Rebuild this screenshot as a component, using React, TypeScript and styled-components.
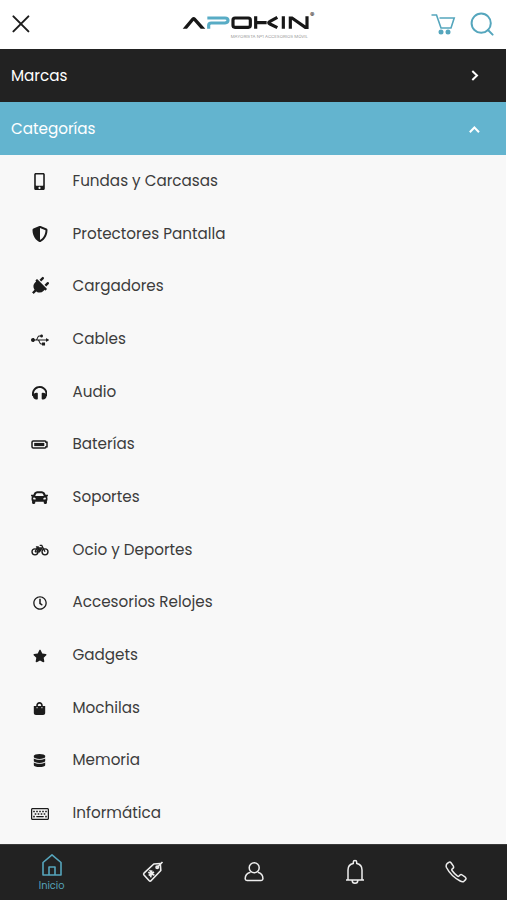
import React from "react";
import styled, { createGlobalStyle, css } from "styled-components";
import {
  FaMobileAlt, FaShieldAlt, FaPlug, FaUsb, FaCar,
  FaRegClock, FaStar, FaShoppingBag, FaDatabase, FaRegKeyboard, FaHeadphones,
} from "react-icons/fa";

const Global = createGlobalStyle`
  * { box-sizing: border-box; }
  body { margin: 0; background: #fff; font-family: Poppins, Inter, sans-serif; }
`;
const Screen = styled.div`
  width: 507px;
  height: 900px;
  display: flex;
  flex-direction: column;
  overflow: hidden;
  background: #fff;
`;
const Header = styled.header`
  height: 49px;
  flex: none;
  display: grid;
  grid-template-columns: 159px 160px 1fr;
  align-items: center;
  padding: 0 13px 0 11px;
`;
const Actions = styled.div`
  display: flex;
  justify-content: flex-end;
  align-items: center;
  gap: 14px;
  padding-bottom: 2px;
  color: #55a6bd;
`;
const CloseBox = styled.div`
  display: flex;
  padding-bottom: 2px;
  color: #1d1d1d;
`;
const Drawing = styled.svg`
  display: block;
  fill: none;
  stroke: currentColor;
`;
const Menu = styled.main`
  flex: 1;
  min-height: 0;
  display: flex;
  flex-direction: column;
  margin-right: 1px;
`;
const Bar = styled.div<{ $active?: boolean }>`
  height: 53px;
  flex: none;
  display: flex;
  align-items: center;
  justify-content: space-between;
  padding: 0 25px 0 11px;
  color: #fff;
  background: ${p => (p.$active ? "#63b4cf" : "#222")};
`;
const Label = styled.span`
  font-size: 15.2px;
  line-height: 24px;
  white-space: nowrap;
`;
const List = styled.ul`
  list-style: none;
  margin: 0;
  padding: 0;
  flex: 1;
  min-height: 0;
  overflow: hidden;
  background: #f8f8f8;
  color: #3c3c3c;
`;
const Row = styled.li`
  height: 52.68px;
  display: grid;
  grid-template-columns: 20px auto;
  justify-content: start;
  column-gap: 23px;
  align-items: center;
  padding: 0 0 1px 29.5px;
`;
const IconBox = styled.span<{ $turn?: boolean }>`
  display: flex;
  justify-content: center;
  align-items: center;
  color: #1c1c1c;
  padding-top: 1.5px;
  ${p => p.$turn && css`svg { transform: rotate(45deg); }`}
`;
const Footer = styled.nav`
  height: 56px;
  flex: none;
  display: grid;
  grid-template-columns: repeat(5, 1fr);
  padding-left: 1px;
  background: #222;
  border-top: 1px solid #3a3a3a;
`;
const Tab = styled.div<{ $active?: boolean }>`
  display: flex;
  flex-direction: column;
  align-items: center;
  justify-content: center;
  gap: 2px;
  padding-bottom: ${p => (p.$active ? 0 : 2)}px;
  font-size: 9.8px;
  line-height: 14px;
  color: ${p => (p.$active ? "#56a5bc" : "#eee")};
`;
const Tagline = styled.text`
  font: 12px Inter, sans-serif;
  fill: #999;
  stroke: none;
`;
const Registered = styled.text`
  font: bold 20px Inter, sans-serif;
  fill: #333;
  stroke: none;
`;

const Logo = () => (
  <Drawing width="160" height="49" viewBox="0 0 480 147" color="#171717" strokeWidth="9.5">
    <path d="M38 86 L65 54 Q71 48 77 54 L106 86 H92 L71 62 L51 86Z" fill="currentColor" stroke="none" />
    <path d="M112 54H165Q174 54 174 61T165 69H124Q116 69 116 76V86" stroke="#58acc5" />
    <rect x="189" y="54" width="52" height="28" rx="6" />
    <path d="M257 49V86M257 68H290M322 52 L300 64 Q292 68 300 72 L322 83M340 49V86M361 86V54H366L406 82H411V49" />
    <Registered x="420" y="50">®</Registered>
    <Tagline x="182" y="115" textLength="232" lengthAdjust="spacingAndGlyphs">MAYORISTA Nº1 ACCESORIOS MÓVIL</Tagline>
  </Drawing>
);

const Battery = () => (
  <Drawing width="17" height="9" viewBox="0 0 17 9">
    <path d="M2.3 1H14Q15 1 15 2.2H16V6.8H15Q15 8 14 8H2.3Q1 8 1 6.8V2.2Q1 1 2.3 1Z" strokeWidth="1.5" />
    <path d="M3.2 4.5H13.3" strokeWidth="3.2" />
  </Drawing>
);

const Bike = () => (
  <Drawing width="18" height="12" viewBox="0 0 18 12" strokeWidth="1.35">
    <circle cx="4" cy="7.8" r="3" />
    <circle cx="14" cy="7.8" r="3" />
    <path d="M4 7.8 6.2 4H11L8.5 7.8H4M8.5 7.8 6.5 3M14 7.8 10.7 1.3H8.7M4.9 2.8H7.8" />
    <path d="M6.3 4.2H11L8.6 7.6Z" fill="currentColor" stroke="none" />
  </Drawing>
);

const items: { label: string; icon: React.ReactNode; turn?: boolean }[] = [
  { label: "Fundas y Carcasas", icon: <FaMobileAlt size={17} /> },
  { label: "Protectores Pantalla", icon: <FaShieldAlt size={16} /> },
  { label: "Cargadores", icon: <FaPlug size={19} />, turn: true },
  { label: "Cables", icon: <FaUsb size={18} /> },
  { label: "Audio", icon: <FaHeadphones size={15.5} /> },
  { label: "Baterías", icon: <Battery /> },
  { label: "Soportes", icon: <FaCar size={17} /> },
  { label: "Ocio y Deportes", icon: <Bike /> },
  { label: "Accesorios Relojes", icon: <FaRegClock size={14} /> },
  { label: "Gadgets", icon: <FaStar size={14} /> },
  { label: "Mochilas", icon: <FaShoppingBag size={13} /> },
  { label: "Memoria", icon: <FaDatabase size={13} /> },
  { label: "Informática", icon: <FaRegKeyboard size={18} /> },
];

export default function App() {
  return (
    <Screen>
      <Global />
      <Header>
        <CloseBox>
          <Drawing width="20" height="20" viewBox="0 0 20 20" strokeWidth="2" strokeLinecap="round">
            <path d="M2.4 2.4 17.4 17.4M17.4 2.4 2.4 17.4" />
          </Drawing>
        </CloseBox>
        <Logo />
        <Actions>
          <Drawing width="26" height="22" viewBox="0 0 26 22" strokeWidth="1.6">
            <path d="M1.5 2H6.5L11 15H21L24.2 5H9.5" />
            <circle cx="11" cy="19" r="2.5" fill="currentColor" stroke="none" />
            <circle cx="18" cy="19" r="2.5" fill="currentColor" stroke="none" />
          </Drawing>
          <Drawing width="24" height="24" viewBox="0 0 24 24" strokeWidth="2" strokeLinecap="round">
            <circle cx="11.2" cy="11.2" r="9.6" />
            <path d="M18 18 22.6 22.6" />
          </Drawing>
        </Actions>
      </Header>
      <Menu>
        <Bar>
          <Label>Marcas</Label>
          <Drawing width="13" height="13" viewBox="0 0 13 13" strokeWidth="2"><path d="M4.3 2 9 6.5 4.3 11" /></Drawing>
        </Bar>
        <Bar $active>
          <Label>Categorías</Label>
          <Drawing width="13" height="13" viewBox="0 0 13 13" strokeWidth="2"><path d="M1.8 10.2 6.4 5.5 11 10.2" /></Drawing>
        </Bar>
        <List>
          {items.map(item => (
            <Row key={item.label}>
              <IconBox $turn={item.turn}>{item.icon}</IconBox>
              <Label>{item.label}</Label>
            </Row>
          ))}
        </List>
      </Menu>
      <Footer>
        <Tab $active>
          <Drawing width="22" height="24" viewBox="0 0 22 24" strokeWidth="1.6" strokeLinejoin="round">
            <path d="M2 9.5 11 1.8 20 9.5V22H2ZM8 22V14H14V22" />
          </Drawing>
          Inicio
        </Tab>
        <Tab>
          <Drawing width="22" height="22" viewBox="0 0 22 22" strokeWidth="1.6" strokeLinejoin="round">
            <path d="M2 12.2 11.8 3 18.3 2.5 18.8 9.5 9 19.8Q8 20.5 7 19.5L2 14Q1.2 13 2 12.2Z" />
            <path d="M20.5 1 15 6.5M6.2 11.2 12.4 14.2M9.8 9.3 8.7 16.3M6.7 14.5 12 11M7.5 9.2 11 12.8" />
            <circle cx="15.2" cy="6.3" r="1.2" />
          </Drawing>
        </Tab>
        <Tab>
          <Drawing width="22" height="22" viewBox="0 0 22 22" strokeWidth="1.5">
            <circle cx="11.2" cy="6.8" r="5" />
            <path d="M7.5 11.2Q2 12.5 2.2 18Q2.3 19.4 4 19.4H18.2Q19.8 19.4 19.9 18Q20.1 12.5 14.8 11.2" />
          </Drawing>
        </Tab>
        <Tab>
          <Drawing width="20" height="26" viewBox="0 0 20 26" strokeWidth="1.5" strokeLinejoin="round">
            <path d="M1 21H19M3 21V11Q3 5.5 8.3 4.5V3Q8.3 1.5 10 1.5T11.7 3V4.5Q17 5.5 17 11V21M7.2 21.5Q7.2 24.3 10 24.3T12.8 21.5" />
          </Drawing>
        </Tab>
        <Tab>
          <Drawing width="22" height="22" viewBox="0 0 22 22" strokeWidth="1.5" strokeLinejoin="round">
            <path d="M2 2.7 3.8 1.3Q5.2.6 6.2 2L8.4 5.2Q9 6.5 8 7.3L7 8.1Q6.5 8.8 7.2 9.8Q9.5 13 12.5 15.2Q13.3 15.7 14 15L15 14Q16 13.2 17.2 14L20.3 16.2Q21.6 17.3 20.6 18.6L18.9 20.3Q17.6 21.3 15.2 20Q5.8 15 1.5 6.5Q.6 4.4 2 2.7Z" />
          </Drawing>
        </Tab>
      </Footer>
    </Screen>
  );
}
